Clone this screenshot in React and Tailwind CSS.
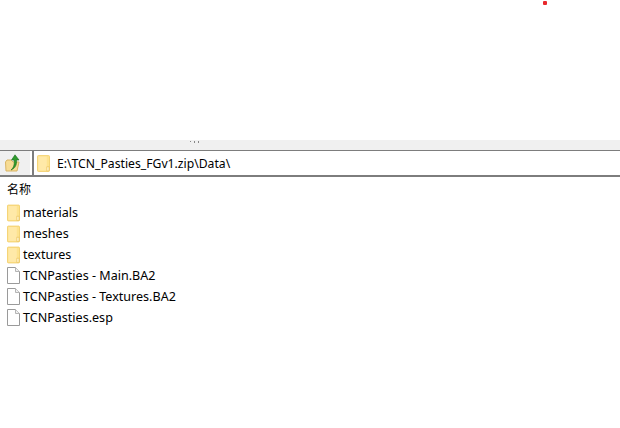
import React from 'react';

const items = [
  { name: 'materials', type: 'folder' },
  { name: 'meshes', type: 'folder' },
  { name: 'textures', type: 'folder' },
  { name: 'TCNPasties - Main.BA2', type: 'file' },
  { name: 'TCNPasties - Textures.BA2', type: 'file' },
  { name: 'TCNPasties.esp', type: 'file' },
];

const FolderIcon = ({ className }) => (
  <svg className={className} viewBox="0 0 14 18" fill="none">
    <path d="M0.5 1.5 Q0.5 0.5 1.5 0.5 H12.5 Q13.5 0.5 13.5 1.5 V16.5 Q13.5 17.5 12.5 17.5 H1.5 Q0.5 17.5 0.5 16.5 Z" fill="#fde38f" stroke="#f3cf6e" />
    <path d="M1.5 1.5 H10.5 V16.5 H1.5 Z" fill="#ffe9a8" />
    <path d="M10.5 12.5 H13 V17 H10.5 Z" fill="#fff3c8" stroke="#e9c15d" strokeWidth="0.7" />
  </svg>
);

const FileIcon = () => (
  <svg className="w-[13px] h-[17px]" viewBox="0 0 13 17" fill="none">
    <path d="M0.5 0.5 H8.5 L12.5 4.5 V16.5 H0.5 Z" fill="#fff" stroke="#9a9a9a" />
    <path d="M8.5 0.5 V4.5 H12.5" fill="#f0f0f0" stroke="#b5b5b5" />
  </svg>
);

const UpIcon = () => (
  <svg className="h-[18px] w-[15px]" viewBox="0 0 15 18" fill="none">
    <path d="M0.5 8 L2 6 H6 L8 8 H14 L12 17 H1 Z" fill="#f7dc94" stroke="#d9b565" />
    <path d="M6 16 C9.5 13 9.5 9 9 6 H6.5 L10 0.8 L14 6 H11.5 C12 11 10 14.5 6 16 Z" fill="#2e9b2c" stroke="#1f6f22" strokeWidth="0.6" />
  </svg>
);

export default function App() {
  return (
    <div className="relative h-[428px] w-[620px] overflow-hidden bg-white font-['Noto_Sans',sans-serif] text-[12.55px] text-black">
      <div className="absolute left-[543px] top-[1px] h-[4px] w-[4px] rounded-[1px] bg-[#e8282c]" />

      <div className="h-[140px]" />
      <div className="relative h-[10px] bg-[#f0f0f0]">
        <div className="absolute left-[190px] top-[1px] flex gap-[3px]">
          <span className="h-px w-px bg-[#888]" />
          <span className="h-[2px] w-px bg-[#888]" />
          <span className="h-[2px] w-px bg-[#888]" />
        </div>
      </div>

      <div className="flex h-[27px] border-t border-b-[2px] border-t-[#7d7d7d] border-b-[#7d7d7d]">
        <div className="flex w-[30px] items-center justify-center bg-[#f0f0f0] pr-[5px]">
          <UpIcon />
        </div>
        <div className="w-[2px] bg-white" />
        <div className="flex flex-1 items-center border-l-[2px] border-[#7d7d7d] pl-[3px]">
          <FolderIcon className="h-[17px] w-[13px]" />
          <span className="ml-[7px] pt-[2px] text-[12.2px] leading-none">E:\TCN_Pasties_FGv1.zip\Data\</span>
        </div>
      </div>

      <div className="flex h-[24px] items-center pl-[7px] pb-[1px] font-['Noto_Sans_CJK_SC',sans-serif] text-[12px]">名称</div>

      <ul className="flex flex-col pt-px">
        {items.map((item) => (
          <li key={item.name} className="flex h-[21px] items-center pl-[7px]">
            {item.type === 'folder' ? <FolderIcon className="h-[18px] w-[13px]" /> : <FileIcon />}
            <span className="ml-[3px] pt-[2px] leading-none">{item.name}</span>
          </li>
        ))}
      </ul>
    </div>
  );
}
